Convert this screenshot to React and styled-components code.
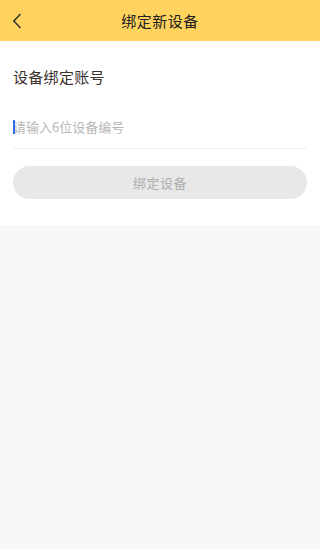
import React, { useState } from 'react';
import styled, { createGlobalStyle } from 'styled-components';

const GlobalStyle = createGlobalStyle`
  html, body {
    margin: 0;
    padding: 0;
    background: #f8f8f8;
    font-family: "Noto Sans CJK SC", "Noto Sans", sans-serif;
  }
  * { box-sizing: border-box; }
`;

export default function App() {
  const [code, setCode] = useState('');
  return (
    <Page>
      <GlobalStyle />
      <Header>
        <BackButton aria-label="back">
          <svg width="10" height="16" viewBox="0 0 10 16">
            <path d="M8.5 1 L1.8 8 L8.5 15" fill="none" stroke="#333" strokeWidth="1.5" />
          </svg>
        </BackButton>
        <Title>绑定新设备</Title>
      </Header>
      <Card>
        <Label>设备绑定账号</Label>
        <InputRow>
          <Caret />
          <Input
            value={code}
            onChange={e => setCode(e.target.value)}
            placeholder="请输入6位设备编号"
          />
        </InputRow>
        <SubmitButton disabled={code.length !== 6}>绑定设备</SubmitButton>
      </Card>
    </Page>
  );
}

const Page = styled.div`
  min-height: 549px;
  background: #f8f8f8;
`;

const Header = styled.header`
  position: relative;
  height: 41px;
  background: #ffd35e;
  display: flex;
  align-items: center;
  justify-content: center;
`;

const BackButton = styled.button`
  position: absolute;
  left: 8px;
  top: 0;
  height: 41px;
  width: 30px;
  border: none;
  background: transparent;
  padding: 0 0 0 4px;
  display: flex;
  align-items: center;
`;

const Title = styled.h1`
  margin: 0;
  font-size: 15px;
  font-weight: 400;
  color: #222;
  letter-spacing: 0.5px;
`;

const Card = styled.section`
  background: #fff;
  padding: 25px 13px 26px;
`;

const Label = styled.div`
  font-size: 15px;
  line-height: 22px;
  color: #3b302b;
  letter-spacing: 0.3px;
`;

const InputRow = styled.div`
  position: relative;
  margin-top: 18px;
  height: 43px;
  border-bottom: 1px solid #f0f0f0;
  display: flex;
  align-items: center;
  padding-bottom: 2px;
`;

const Caret = styled.span`
  position: absolute;
  left: 0;
  top: 14px;
  width: 2px;
  height: 14px;
  background: #2f6bf0;
`;

const Input = styled.input`
  flex: 1;
  border: none;
  outline: none;
  padding: 0;
  font-family: inherit;
  font-size: 13px;
  color: #333;
  background: transparent;
  caret-color: #2f6bf0;
  &::placeholder {
    color: #b8b8b8;
  }
`;

const SubmitButton = styled.button`
  display: block;
  width: 100%;
  margin-top: 17px;
  height: 33px;
  border: none;
  border-radius: 17px;
  background: ${p => (p.disabled ? '#e8e8e8' : '#ffd35e')};
  color: ${p => (p.disabled ? '#adadad' : '#333')};
  font-family: inherit;
  font-size: 13px;
  letter-spacing: 0.5px;
`;
